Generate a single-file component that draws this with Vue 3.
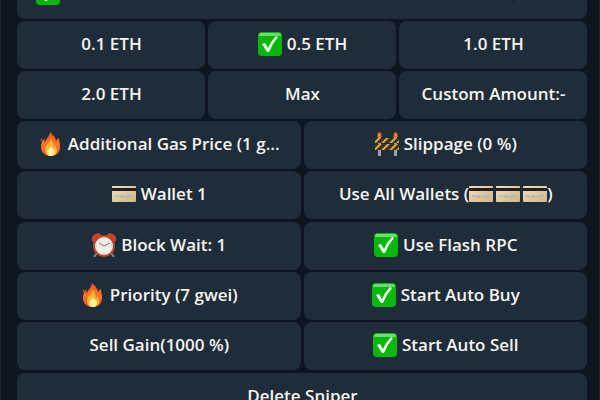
<script setup>
const sections = [
  [
    [{ icons: ['check'], text: 'Manual Pair address to test results and amounts to buy soon.', head: true }],
    [{ text: '0.1 ETH' }, { icons: ['check'], text: '0.5 ETH' }, { text: '1.0 ETH' }],
    [{ text: '2.0 ETH' }, { text: 'Max' }, { text: 'Custom Amount:-' }],
    [{ icons: ['fire'], text: 'Additional Gas Price (1 g...' }, { icons: ['barrier'], text: 'Slippage (0 %)' }],
    [{ icons: ['card'], text: 'Wallet 1' }, { before: 'Use All Wallets (', icons: ['card', 'card', 'card'], after: ')' }],
  ],
  [
    [{ icons: ['clock'], text: 'Block Wait: 1' }, { icons: ['check'], text: 'Use Flash RPC' }],
    [{ icons: ['fire'], text: 'Priority (7 gwei)' }, { icons: ['check'], text: 'Start Auto Buy' }],
    [{ text: 'Sell Gain(1000 %)' }, { icons: ['check'], text: 'Start Auto Sell' }],
  ],
  [[{ text: 'Delete Sniper' }]],
]
</script>

<template>
  <svg class="defs" aria-hidden="true">
    <defs>
      <linearGradient id="flame" x1="0" y1="0" x2="0" y2="1">
        <stop offset="0" stop-color="#f04a1c" />
        <stop offset="0.5" stop-color="#fb7a26" />
        <stop offset="1" stop-color="#ee4b20" />
      </linearGradient>
      <linearGradient id="paper" x1="0" y1="0" x2="1" y2="1">
        <stop offset="0" stop-color="#f2dfba" />
        <stop offset="1" stop-color="#cfb48a" />
      </linearGradient>
      <symbol id="check" viewBox="0 0 24 24">
        <rect width="24" height="24" rx="4" fill="#05b80b" />
        <path d="M3 1h18q2 0 2 3H1q0-3 2-3z" fill="#6cdc70" />
        <path d="M4 12l3-1 3 5q3-7 8-12l2 1q-6 7-9 15H9z" fill="#f4fff2" />
      </symbol>
      <symbol id="fire" viewBox="0 0 24 24">
        <path d="M11 0c-1 5-4 7-5 10-1-1-1-2 0-4-3 2-4 6-4 9 0 6 4 9 10 9s9-4 9-9c0-4-1-6-1-9-2 1-3 2-3 4 0-5-3-7-6-10z" fill="url(#flame)" />
        <path d="M12 6c0 4-6 7-6 12 0 4 3 6 6 6 4 0 7-3 6-7l-2-4-1 3c0-4-2-7-3-10z" fill="#ffb52f" />
        <path d="M12 14c-1 3-4 4-4 6 0 3 2 4 4 4s4-2 4-4c0-3-3-3-4-6z" fill="#fff0a0" />
        <path d="M3 6c-1 1-2 2-1 4 1-1 2-2 1-4z" fill="#d9421c" />
      </symbol>
      <symbol id="barrier" viewBox="0 0 24 24">
        <path d="M3 5h3v19H3zM19 5h3v19h-3z" fill="#9da4a8" />
        <path d="M0 6h24v5H0zM0 12h24v6H0z" fill="#3d3023" />
        <path d="M0 9l3-3h3l-5 5H0zM6 11l5-5h3l-5 5zM14 11l5-5h3l-5 5zM21 11l3-3v3zM0 16l4-4h3l-6 6H0zM6 18l6-6h3l-6 6zM14 18l6-6h3l-6 6zM21 18l3-3v3z" fill="#d3a83a" />
        <path d="M2 5l1-4q1-2 3 0l1 4zM18 5l1-4q1-2 3 0l1 4z" fill="#ee5a1e" />
        <circle cx="4" cy="3" r="1" fill="#ffc12f" />
        <circle cx="21" cy="3" r="1" fill="#ffc12f" />
      </symbol>
      <symbol id="card" viewBox="0 0 24 24">
        <rect y="4" width="24" height="16" rx="1" fill="url(#paper)" />
        <path d="M0 6h24v3H0z" fill="#211d20" />
        <path d="M3 13h3v1h3v-1h3v1h3v-1h6v2h-4v1h-3v-1h-3v1H8v-1H3z" fill="#b9b8b1" />
      </symbol>
      <symbol id="clock" viewBox="0 0 24 24">
        <path d="M5 20l-3 4M19 20l3 4" stroke="#8a8580" stroke-width="2" />
        <path d="M0 8q-1-7 7-8l3 3-8 6zM24 8q1-7-7-8l-3 3 8 6z" fill="#cf3f2b" />
        <circle cx="12" cy="13" r="10" fill="#f1efe5" stroke="#b9492f" stroke-width="2" />
        <path d="M7 10l5 3 6-3" fill="none" stroke="#77787a" stroke-width="1" />
        <path d="M12 4v2M12 20v2M3 13h2M19 13h2" stroke="#b9b6ac" />
      </symbol>
    </defs>
  </svg>
  <main class="keyboard">
    <section v-for="(rows, s) in sections" :key="s" class="section">
      <div v-for="(row, r) in rows" :key="r" class="row">
        <button v-for="(b, i) in row" :key="i" type="button" class="key" :class="{ head: b.head }">
          <span v-if="b.before">{{ b.before }}</span>
          <span v-if="b.icons" class="icons">
            <svg v-for="(icon, k) in b.icons" :key="k" class="icon" aria-hidden="true"><use :href="'#' + icon" /></svg>
          </span>
          <span v-if="b.text" class="label">{{ b.text }}</span>
          <span v-if="b.after">{{ b.after }}</span>
        </button>
      </div>
    </section>
  </main>
</template>

<style>
body {
  background: #0d1520;
  overflow: hidden;
}
</style>

<style scoped>
.defs {
  position: absolute;
  width: 0;
  height: 0;
}
.keyboard {
  display: flex;
  flex-direction: column;
  gap: 3px;
  height: 100vh;
  overflow: hidden;
  padding: 0 12px 0 16px;
  border: solid #18222e;
  border-width: 0 1px;
  box-sizing: border-box;
}
.section {
  display: flex;
  flex-direction: column;
  flex-shrink: 0;
  gap: 2px;
}
.row {
  display: grid;
  grid-auto-flow: column;
  grid-auto-columns: minmax(0, 1fr);
  gap: 3px;
}
.key {
  display: flex;
  align-items: center;
  justify-content: center;
  height: 48px;
  padding: 0 7px 2px 8px;
  border: 0;
  border-radius: 8px;
  background: #1f2c39;
  color: #f6f5f0;
  font: 600 17px/24px "Open Sans", sans-serif;
  white-space: nowrap;
}
.head {
  align-items: flex-end;
  height: 19px;
  padding-bottom: 14px;
  border-radius: 0 0 8px 8px;
}
.head .label {
  color: #1a2531;
}
.icons {
  display: flex;
  gap: 3px;
}
.icon {
  width: 24px;
  height: 24px;
}
.icons + .label {
  margin-left: 5px;
}
</style>
